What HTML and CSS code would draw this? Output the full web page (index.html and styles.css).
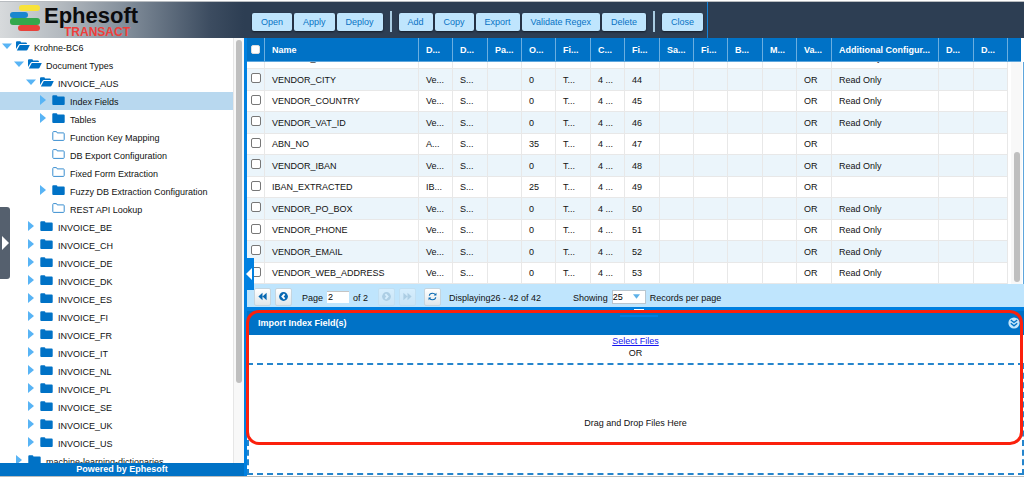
FILE: index.html
```html
<!DOCTYPE html>
<html lang="en">
<head>
<meta charset="utf-8">
<title>Ephesoft Transact</title>
<link rel="stylesheet" href="styles.css">
</head>
<body>
<svg class="defs" aria-hidden="true">
  <symbol id="open" viewBox="0 0 14 10"><path d="M0 8V1.2Q0 .3 1 .3H4Q4.800 .3 5 1.500H10Q11 1.500 11 3H4Q3 3 2.500 4Z"/><path d="M3.800 4H13.800L11.500 8.800Q11.200 9.500 10.300 9.500H.8Z"/></symbol>
  <symbol id="closed" viewBox="0 0 14 10"><path d="M.3 1.200Q.3 .2 1.300 .2H4.200Q5.200 .2 5.500 1.600H11.700Q12.700 1.600 12.700 2.600V8.900Q12.700 9.900 11.700 9.900H1.300Q.3 9.900 .3 8.900Z"/></symbol>
  <symbol id="leaf" viewBox="0 0 14 10"><path d="M.8 1.400Q.8 .6 1.600 .6H4.300Q5 .6 5.200 1.900H11.400Q12.200 1.900 12.200 2.700V8.600Q12.200 9.400 11.400 9.400H1.600Q.8 9.400 .8 8.600Z" fill="none" stroke="#3b8fd0"/></symbol>
  <symbol id="down" viewBox="0 0 10 10"><path d="M0 2.500H10L5 8Z"/></symbol>
  <symbol id="right" viewBox="0 0 10 10"><path d="M2 0L8 5L2 10Z"/></symbol>
</svg>
<div class="app">
  <header class="top">
    <div class="brand">
      <svg class="mark" viewBox="0 0 30 28" aria-hidden="true">
        <rect x="9" y="1" width="21" height="6" rx="3" fill="#f8e33a"/>
        <rect x="0" y="8" width="18" height="6" rx="3" fill="#1a86cf"/>
        <rect x="0" y="14" width="30" height="7" rx="3" fill="#35a84c"/>
        <rect x="8" y="21" width="22" height="6" rx="3" fill="#e8413a"/>
      </svg>
      <div class="wordmark"><span class="name">Ephesoft</span><span class="sub">TRANSACT</span></div>
    </div>
    <nav class="toolbar">
      <button>Open</button><button>Apply</button><button>Deploy</button>
      <i class="sep"></i>
      <button>Add</button><button>Copy</button><button>Export</button><button>Validate Regex</button><button>Delete</button>
      <i class="sep"></i>
      <button>Close</button>
    </nav>
  </header>
  <div class="main">
    <aside class="side">
      <div class="treewrap">
        <ul class="tree">
          <li class="l0"><svg class="arr"><use href="#down"/></svg><svg class="fold"><use href="#open"/></svg>Krohne-BC6</li>
          <li class="l1"><svg class="arr"><use href="#down"/></svg><svg class="fold"><use href="#open"/></svg>Document Types</li>
          <li class="l2"><svg class="arr"><use href="#down"/></svg><svg class="fold"><use href="#open"/></svg>INVOICE_AUS</li>
          <li class="l3 selected"><svg class="arr"><use href="#right"/></svg><svg class="fold"><use href="#closed"/></svg>Index Fields</li>
          <li class="l3"><svg class="arr"><use href="#right"/></svg><svg class="fold"><use href="#closed"/></svg>Tables</li>
          <li class="l3"><svg class="arr"></svg><svg class="fold"><use href="#leaf"/></svg>Function Key Mapping</li>
          <li class="l3"><svg class="arr"></svg><svg class="fold"><use href="#leaf"/></svg>DB Export Configuration</li>
          <li class="l3"><svg class="arr"></svg><svg class="fold"><use href="#leaf"/></svg>Fixed Form Extraction</li>
          <li class="l3"><svg class="arr"><use href="#right"/></svg><svg class="fold"><use href="#closed"/></svg>Fuzzy DB Extraction Configuration</li>
          <li class="l3"><svg class="arr"></svg><svg class="fold"><use href="#leaf"/></svg>REST API Lookup</li>
          <li class="l2"><svg class="arr"><use href="#right"/></svg><svg class="fold"><use href="#closed"/></svg>INVOICE_BE</li>
          <li class="l2"><svg class="arr"><use href="#right"/></svg><svg class="fold"><use href="#closed"/></svg>INVOICE_CH</li>
          <li class="l2"><svg class="arr"><use href="#right"/></svg><svg class="fold"><use href="#closed"/></svg>INVOICE_DE</li>
          <li class="l2"><svg class="arr"><use href="#right"/></svg><svg class="fold"><use href="#closed"/></svg>INVOICE_DK</li>
          <li class="l2"><svg class="arr"><use href="#right"/></svg><svg class="fold"><use href="#closed"/></svg>INVOICE_ES</li>
          <li class="l2"><svg class="arr"><use href="#right"/></svg><svg class="fold"><use href="#closed"/></svg>INVOICE_FI</li>
          <li class="l2"><svg class="arr"><use href="#right"/></svg><svg class="fold"><use href="#closed"/></svg>INVOICE_FR</li>
          <li class="l2"><svg class="arr"><use href="#right"/></svg><svg class="fold"><use href="#closed"/></svg>INVOICE_IT</li>
          <li class="l2"><svg class="arr"><use href="#right"/></svg><svg class="fold"><use href="#closed"/></svg>INVOICE_NL</li>
          <li class="l2"><svg class="arr"><use href="#right"/></svg><svg class="fold"><use href="#closed"/></svg>INVOICE_PL</li>
          <li class="l2"><svg class="arr"><use href="#right"/></svg><svg class="fold"><use href="#closed"/></svg>INVOICE_SE</li>
          <li class="l2"><svg class="arr"><use href="#right"/></svg><svg class="fold"><use href="#closed"/></svg>INVOICE_UK</li>
          <li class="l2"><svg class="arr"><use href="#right"/></svg><svg class="fold"><use href="#closed"/></svg>INVOICE_US</li>
          <li class="l1"><svg class="arr"><use href="#right"/></svg><svg class="fold"><use href="#closed"/></svg>machine-learning-dictionaries</li>
        </ul>
        <div class="track treetrack"><div class="thumb"></div></div>
      </div>
      <footer class="powered">Powered by Ephesoft</footer>
      <button class="drawer" aria-label="Open drawer"><svg viewBox="0 0 7 14"><path d="M0 0L7 7L0 14Z"/></svg></button>
    </aside>
    <section class="content">
      <button class="collapse" aria-label="Collapse tree"><svg viewBox="0 0 6 12"><path d="M6 0L0 6L6 12Z"/></svg></button>
      <div class="gridhead">
        <table class="grid">
          <colgroup><col class="c-check"><col><col class="c-s"><col class="c-m"><col class="c-s"><col class="c-s"><col class="c-m"><col class="c-s"><col class="c-m"><col class="c-s"><col class="c-s"><col class="c-m"><col class="c-s"><col class="c-m"><col class="c-wide"><col class="c-m"><col class="c-s"></colgroup>
          <thead><tr><th><input type="checkbox" aria-label="Select all"></th><th>Name</th><th>D...</th><th>D...</th><th>Pa...</th><th>O...</th><th>Fi...</th><th>C...</th><th>Fi...</th><th>Sa...</th><th>Fi...</th><th>B...</th><th>M...</th><th>Va...</th><th>Additional Configur...</th><th>D...</th><th>D...</th></tr></thead>
        </table>
      </div>
      <div class="gridbody">
        <div class="rows">
        <table class="grid">
          <colgroup><col class="c-check"><col><col class="c-s"><col class="c-m"><col class="c-s"><col class="c-s"><col class="c-m"><col class="c-s"><col class="c-m"><col class="c-s"><col class="c-s"><col class="c-m"><col class="c-s"><col class="c-m"><col class="c-wide"><col class="c-m"><col class="c-s"></colgroup>
          <tbody>
          <tr><td><td>VENDOR_ZIP<td><td><td><td><td><td><td><td><td><td><td><td><td>Read Only<td><td></tr>
          <tr><td><input type="checkbox" aria-label="VENDOR_CITY"><td>VENDOR_CITY<td>Ve...<td>S...<td><td>0<td>T...<td>4 ...<td>44<td><td><td><td><td>OR<td>Read Only<td><td></tr>
          <tr><td><input type="checkbox" aria-label="VENDOR_COUNTRY"><td>VENDOR_COUNTRY<td>Ve...<td>S...<td><td>0<td>T...<td>4 ...<td>45<td><td><td><td><td>OR<td>Read Only<td><td></tr>
          <tr><td><input type="checkbox" aria-label="VENDOR_VAT_ID"><td>VENDOR_VAT_ID<td>Ve...<td>S...<td><td>0<td>T...<td>4 ...<td>46<td><td><td><td><td>OR<td>Read Only<td><td></tr>
          <tr><td><input type="checkbox" aria-label="ABN_NO"><td>ABN_NO<td>A...<td>S...<td><td>35<td>T...<td>4 ...<td>47<td><td><td><td><td>OR<td><td><td></tr>
          <tr><td><input type="checkbox" aria-label="VENDOR_IBAN"><td>VENDOR_IBAN<td>Ve...<td>S...<td><td>0<td>T...<td>4 ...<td>48<td><td><td><td><td>OR<td>Read Only<td><td></tr>
          <tr><td><input type="checkbox" aria-label="IBAN_EXTRACTED"><td>IBAN_EXTRACTED<td>IB...<td>S...<td><td>25<td>T...<td>4 ...<td>49<td><td><td><td><td>OR<td><td><td></tr>
          <tr><td><input type="checkbox" aria-label="VENDOR_PO_BOX"><td>VENDOR_PO_BOX<td>Ve...<td>S...<td><td>0<td>T...<td>4 ...<td>50<td><td><td><td><td>OR<td>Read Only<td><td></tr>
          <tr><td><input type="checkbox" aria-label="VENDOR_PHONE"><td>VENDOR_PHONE<td>Ve...<td>S...<td><td>0<td>T...<td>4 ...<td>51<td><td><td><td><td>OR<td>Read Only<td><td></tr>
          <tr><td><input type="checkbox" aria-label="VENDOR_EMAIL"><td>VENDOR_EMAIL<td>Ve...<td>S...<td><td>0<td>T...<td>4 ...<td>52<td><td><td><td><td>OR<td>Read Only<td><td></tr>
          <tr><td><input type="checkbox" aria-label="VENDOR_WEB_ADDRESS"><td>VENDOR_WEB_ADDRESS<td>Ve...<td>S...<td><td>0<td>T...<td>4 ...<td>53<td><td><td><td><td>OR<td>Read Only<td><td></tr>
          </tbody>
        </table>
        </div>
        <div class="track gridtrack"><div class="thumb"></div></div>
      </div>
      <div class="pager">
        <div class="group">
          <button aria-label="First page"><svg viewBox="0 0 12 12"><path d="M6 2V10L1.500 6ZM10.500 2V10L6 6Z"/></svg></button>
          <button aria-label="Previous page"><svg viewBox="0 0 12 12"><circle cx="6" cy="6" r="4.800"/><path class="cut" d="M7.200 3.500L4.800 6L7.200 8.500"/></svg></button>
        </div>
        <div class="group pageno"><label for="page">Page</label><input id="page" type="text" value="2"><span>of 2</span></div>
        <div class="group">
          <button disabled aria-label="Next page"><svg viewBox="0 0 12 12"><circle cx="6" cy="6" r="4.800"/><path class="cut" d="M4.800 3.500L7.200 6L4.800 8.500"/></svg></button>
          <button disabled aria-label="Last page"><svg viewBox="0 0 12 12"><path d="M1.500 2V10L6 6ZM6 2V10L10.500 6Z"/></svg></button>
        </div>
        <button aria-label="Refresh"><svg viewBox="0 0 12 12"><path class="line" d="M2.500 5.200Q2.800 2.500 6 2.500Q8 2.500 9.200 4M9.500 6.800Q9.200 9.500 6 9.500Q4 9.500 2.800 8"/><path d="M10.300 2V5H7.300ZM1.700 10V7H4.700Z"/></svg></button>
        <span class="count">Displaying26 - 42 of 42</span>
        <div class="group size"><label for="size">Showing</label><span class="pick"><select id="size"><option>25</option></select><svg viewBox="0 0 8 5"><path d="M0 0H8L4 5Z"/></svg></span><span>Records per page</span></div>
      </div>
      <div class="split"></div>
      <div class="import">
        <h2><span>Import Index Field(s)</span><button aria-label="Collapse panel"><svg viewBox="0 0 12 12"><circle cx="6" cy="6" r="5.600"/><path d="M2.800 3L6 5.500L9.200 3M2.800 6.200L6 8.800L9.200 6.200" fill="none"/></svg></button></h2>
        <div class="choose"><a href="#">Select Files</a><span>OR</span></div>
        <div class="drop">Drag and Drop Files Here</div>
        <div class="callout"></div>
        <div class="handle"></div>
      </div>
    </section>
  </div>
</div>
</body>
</html>
```
FILE: styles.css
```css
* { box-sizing: border-box; }
body { margin: 0; font: 9px/12px "Liberation Sans", Arial, sans-serif; color: #111; background: #fff; }
button, input, select { font: inherit; margin: 0; padding: 0; border: 0; border-radius: 0; }
.defs { position: absolute; width: 0; height: 0; }
.app { display: flex; flex-direction: column; height: 100vh; padding: 1px 0 2px; }

.top { flex: none; display: flex; height: 37px; border-top: 1px solid #b8bcc0; background: #2d3e53; }
.brand { flex: none; display: flex; gap: 4px; width: 244px; padding: 2px 0 0 10px; background: linear-gradient(90deg, #d7dadc 0, #b4bac0 60px, #7f8b98 130px, #3c4c60 210px, #2d3e53 244px); }
.mark { width: 30px; height: 28px; }
.wordmark { display: flex; flex-direction: column; font: bold 22px/24px "Liberation Sans", Arial, sans-serif; color: #0b0b0d; }
.sub { padding-left: 20px; font-size: 12px; line-height: 9px; color: #ef3e3a; }
.toolbar { display: flex; align-items: center; gap: 2px; padding: 3px 4px 0 8px; border-right: 1px solid #1583d8; }
.toolbar button { height: 18px; padding: 0 9px; border-radius: 2px; background: #bfe5fd; color: #0873c4; box-shadow: 0 1px 2px #131d29; white-space: nowrap; }
.sep { width: 2px; height: 21px; margin: 0 5px; background: #a9cce2; }

.main { flex: 1; display: flex; min-height: 0; border-bottom: 1px solid #b9bcbd; }
.side { position: relative; flex: none; display: flex; flex-direction: column; width: 244px; }
.treewrap { flex: 1; display: flex; min-height: 0; overflow: hidden; }
.tree { flex: 1; margin: 0; padding: 0; list-style: none; white-space: nowrap; }
.tree li { display: flex; align-items: center; height: 18px; padding-top: 1px; }
.tree .selected { background: #b8d8ef; }
.l0 { padding-left: 2px; }
.l1 { padding-left: 14px; }
.l2 { padding-left: 26px; }
.l3 { padding-left: 38px; }
.arr { width: 10px; height: 10px; margin: 0 4px 3px 0; fill: #58b4f5; }
.fold { width: 14px; height: 10px; margin: 0 4px 3px 0; fill: #0072c6; }
.track { flex: none; background: #f8f8f8; }
.treetrack { width: 11px; padding: 2px 2px 0; border-left: 1px solid #e6e6e6; }
.treetrack .thumb { height: 81%; }
.thumb { width: 6px; border-radius: 3px; background: #bfbfbf; }
.powered { flex: none; height: 13px; background: #0072c6; color: #fff; font-weight: bold; text-align: center; }
.drawer { position: absolute; left: 0; top: 169px; width: 10px; height: 72px; padding-left: 2px; border-radius: 0 3px 3px 0; background: #55606e; }
.drawer svg { display: block; width: 7px; height: 14px; fill: #fff; }

.content { position: relative; flex: 1; display: flex; flex-direction: column; min-width: 0; border-left: 3px solid #0080e0; }
.collapse { position: absolute; z-index: 2; left: -3px; top: 220px; width: 10px; height: 32px; padding-left: 2px; background: #0080e0; }
.collapse svg { display: block; width: 6px; height: 12px; fill: #fff; }
.gridhead { flex: none; padding-right: 13px; margin-right: 3px; background: #0072c6; border-bottom: 1px solid #5ea6dc; }
.grid { width: 100%; table-layout: fixed; border-collapse: separate; border-spacing: 0; }
.c-check { width: 18px; }
.c-s { width: 34px; }
.c-m { width: 35px; }
.c-wide { width: 107px; }
th, td { padding: 0 0 0 7px; text-align: left; white-space: nowrap; overflow: hidden; }
th { height: 23px; border-right: 1px solid #6aaee0; color: #fff; }
td { height: 22px; border-right: 1px solid #e8e8e8; border-bottom: 1px solid #e8e8e8; }
tr:nth-child(odd) td { height: 21px; }
tr:nth-child(even) td { background: #ebf5fb; }
td:first-child, th:first-child { padding: 0 0 0 4px; }
input[type="checkbox"] { appearance: none; display: block; width: 10px; height: 10px; margin-bottom: 3px; border: 1px solid #777; border-radius: 2px; background: #fff; }
th input[type="checkbox"] { margin: 0; width: 9px; height: 9px; border-color: #ddd; }
.gridbody { flex: none; display: flex; height: 222px; border-right: 1px solid #5ea6dc; }
.rows { flex: 1; display: flex; flex-direction: column; justify-content: flex-end; overflow: hidden; }
.gridtrack { width: 11px; margin: 0 1px 0 3px; padding: 90px 0 0 3px; }
.gridtrack .thumb { height: 130px; }

.pager { flex: none; display: flex; align-items: center; gap: 8px; height: 23px; padding: 2px 0 0 7px; background: #bfe5fd; white-space: nowrap; }
.group { display: flex; align-items: center; gap: 4px; }
.pageno { padding: 0 2px; }
.pager button { width: 17px; height: 18px; padding: 2px; border: 1px solid #c5d5df; border-radius: 2px; background: linear-gradient(#fff, #dfe6ea); }
.pager button svg { display: block; width: 11px; height: 11px; margin-bottom: 2px; fill: #0868b2; }
.pager button:disabled { opacity: .35; }
.pager button:disabled svg { fill: #8ba5b8; }
.pager button .cut { fill: none; stroke: #fff; stroke-width: 2; }
.pager button .line { fill: none; stroke: #0868b2; stroke-width: 1.200; }
.pager label, .pager span { padding-top: 2px; }
.pager input { width: 22px; height: 12px; padding: 0 1px; background: #fff; border-top: 1px solid #c4c4c4; }
.size { padding-left: 24px; }
.pager .pick { display: flex; align-items: center; width: 34px; height: 14px; padding: 0 5px 0 0; border: 1px solid #b8c6d0; background: #fff; }
.pick select { flex: 1; min-width: 0; appearance: none; background: none; outline: 0; }
.pick svg { flex: none; width: 7px; height: 5px; fill: #5db1e8; }

.split { flex: none; height: 4px; background: #0080e0; }
.import { position: relative; flex: 1; display: flex; flex-direction: column; min-height: 0; }
h2 { flex: none; display: flex; align-items: center; justify-content: space-between; height: 24px; margin: 0; padding: 0 4px 0 11px; background: #0072c6; color: #fff; font-size: 9px; }
h2 button { width: 12px; height: 12px; background: none; }
h2 svg { display: block; width: 12px; height: 12px; fill: #c4e6fa; stroke: #0072c6; stroke-width: 1.300; }
h2 circle { stroke: none; }
.choose { flex: none; display: flex; flex-direction: column; align-items: center; height: 28px; }
.choose a { color: #1414ee; }
.drop { flex: 1; display: flex; align-items: center; justify-content: center; margin-bottom: 1px; padding-top: 8px; border: 2px dashed #2585cc; }
.handle { position: absolute; z-index: 4; left: 48%; top: -2px; width: 38px; height: 8px; border-bottom: 2px solid #0080e0; background: linear-gradient(#fff, #fff) center top / 10px 1px no-repeat; }
.callout { position: absolute; z-index: 3; left: -1px; right: 1px; top: -1px; height: 135px; border: 3px solid #fb200c; border-radius: 13px; pointer-events: none; }
```
